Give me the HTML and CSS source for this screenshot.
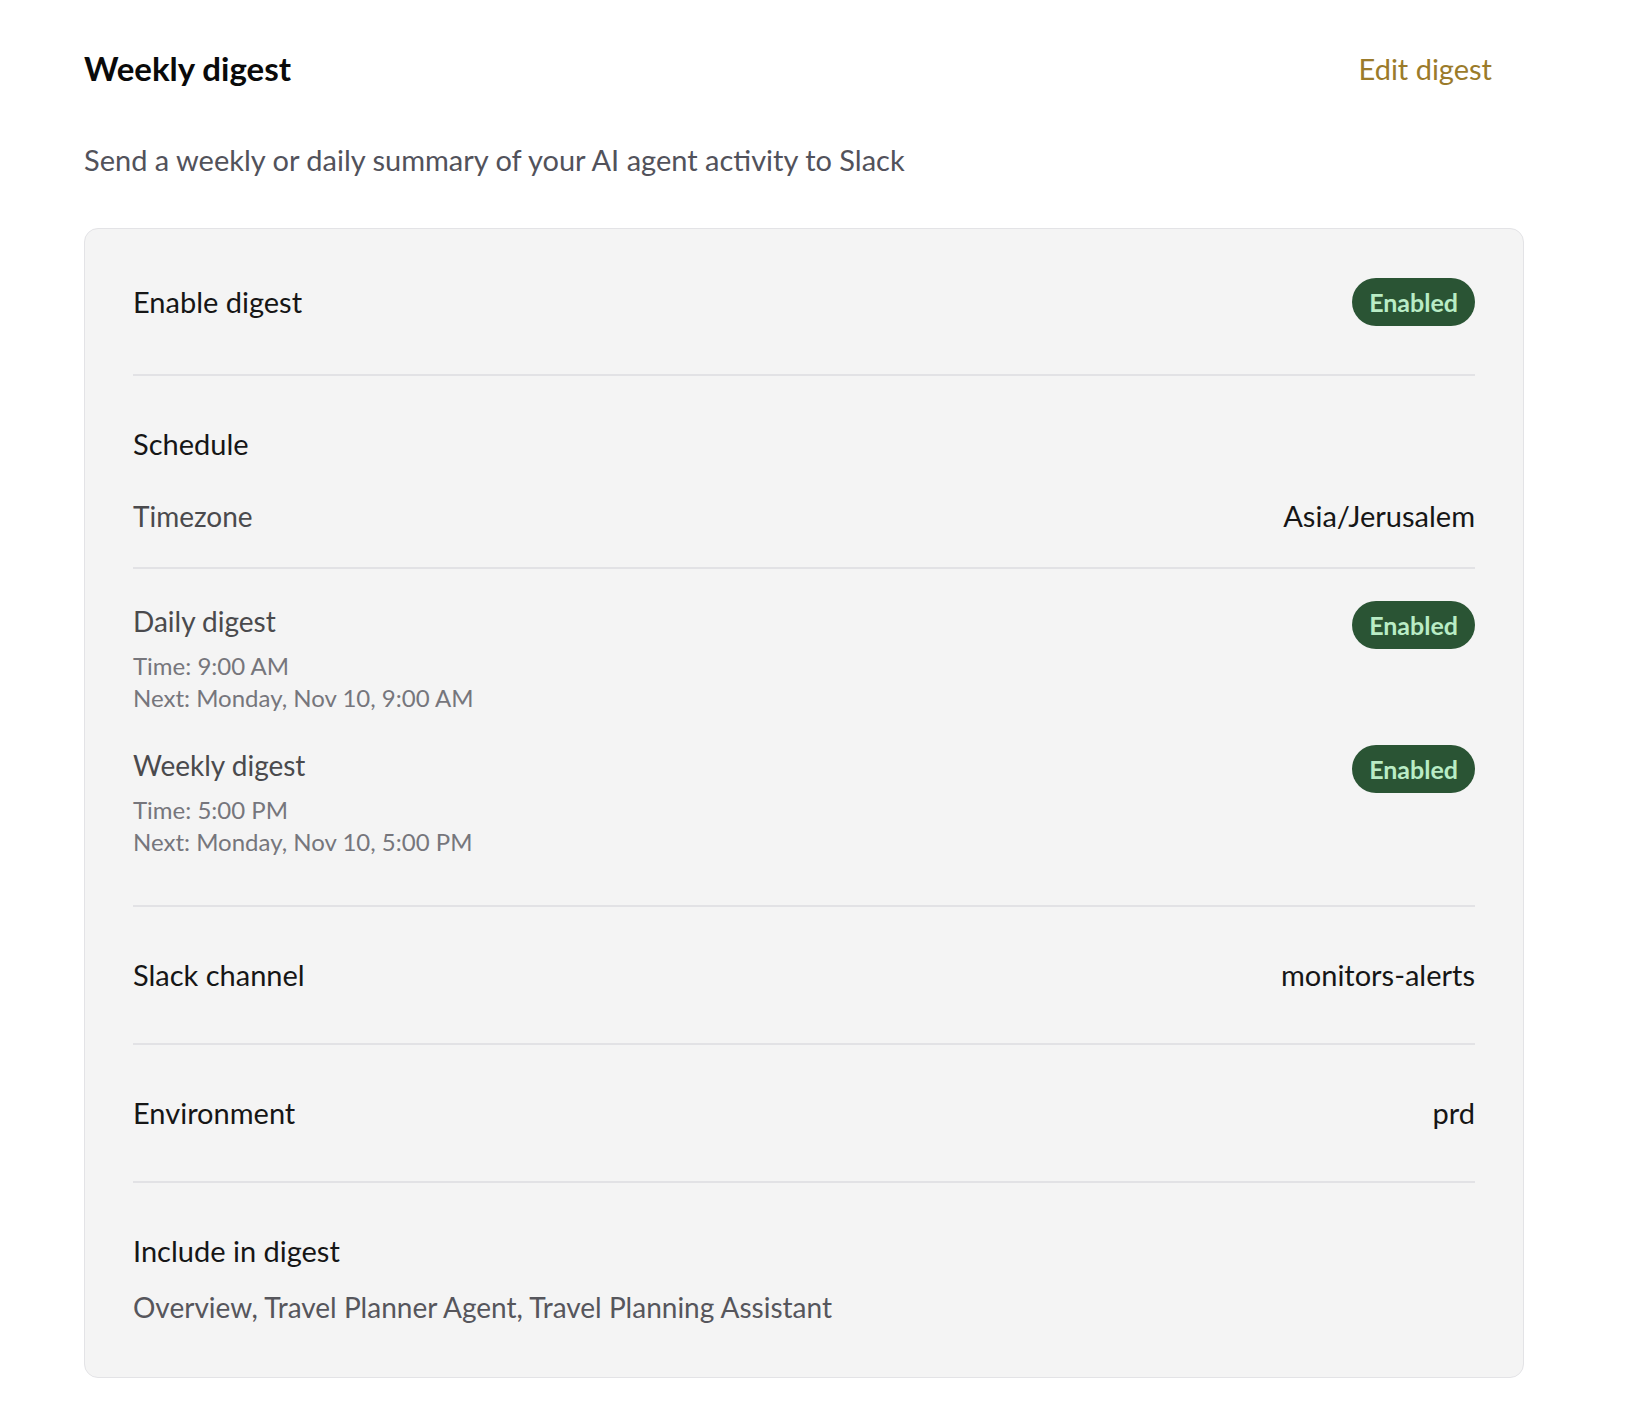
FILE: index.html
```html
<!DOCTYPE html>
<html lang="en">
<head>
<meta charset="utf-8">
<title>Weekly digest</title>
<link rel="stylesheet" href="styles.css">
</head>
<body>
<main class="page">
  <header class="header">
    <h1 class="title">Weekly digest</h1>
    <button class="edit-btn" type="button">Edit digest</button>
  </header>
  <p class="subtitle">Send a weekly or daily summary of your AI agent activity to Slack</p>

  <section class="card">
    <div class="row row-main row-first">
      <span class="label">Enable digest</span>
      <span class="badge">Enabled</span>
    </div>

    <div class="section schedule">
      <div class="label">Schedule</div>
      <div class="kv">
        <span class="muted-label">Timezone</span>
        <span class="value">Asia/Jerusalem</span>
      </div>
    </div>

    <div class="section digests">
      <div class="digest">
        <div class="digest-info">
          <div class="muted-label">Daily digest</div>
          <div class="meta">
            <div>Time: 9:00 AM</div>
            <div>Next: Monday, Nov 10, 9:00 AM</div>
          </div>
        </div>
        <span class="badge">Enabled</span>
      </div>
      <div class="digest">
        <div class="digest-info">
          <div class="muted-label">Weekly digest</div>
          <div class="meta">
            <div>Time: 5:00 PM</div>
            <div>Next: Monday, Nov 10, 5:00 PM</div>
          </div>
        </div>
        <span class="badge">Enabled</span>
      </div>
    </div>

    <div class="row row-main">
      <span class="label">Slack channel</span>
      <span class="value">monitors-alerts</span>
    </div>

    <div class="row row-main">
      <span class="label">Environment</span>
      <span class="value">prd</span>
    </div>

    <div class="section include">
      <div class="label">Include in digest</div>
      <div class="include-list">Overview, Travel Planner Agent, Travel Planning Assistant</div>
    </div>
  </section>
</main>
</body>
</html>
```

FILE: styles.css
```css
* {
  box-sizing: border-box;
}

html, body {
  margin: 0;
  padding: 0;
  background: #ffffff;
}

body {
  font-family: "Lato", "Noto Sans", sans-serif;
  color: #1a1a1a;
}

.page {
  width: 1440px;
  margin-left: 84px;
  padding-top: 48px;
}

.header {
  display: flex;
  align-items: center;
  justify-content: space-between;
  height: 41px;
}

.title {
  margin: 0;
  font-size: 33px;
  font-weight: 700;
  line-height: 41px;
  color: #0a0a0a;
}

.edit-btn {
  background: none;
  border: none;
  padding: 0 32px 0 0;
  font-family: inherit;
  font-size: 29px;
  line-height: 41px;
  color: #9b7b2a;
  cursor: pointer;
}

.subtitle {
  margin: 51px 0 0;
  font-size: 29px;
  line-height: 40px;
  color: #52525b;
}

.card {
  margin-top: 48px;
  background: #f4f4f4;
  border: 1px solid #e3e3e6;
  border-radius: 14px;
  padding: 0 48px;
}

.row {
  display: flex;
  align-items: center;
  justify-content: space-between;
}

.row-main {
  padding: 48px 0;
  border-bottom: 2px solid #e2e2e5;
}

.row-first {
  padding: 49px 0 48px;
}

.label {
  font-size: 29px;
  line-height: 40px;
  color: #161616;
}

.value {
  font-size: 29px;
  line-height: 40px;
  color: #161616;
}

.muted-label {
  font-size: 28px;
  line-height: 40px;
  color: #4a4a4d;
}

.badge {
  display: inline-flex;
  align-items: center;
  justify-content: center;
  height: 48px;
  padding: 0 17px;
  border-radius: 24px;
  background: #2a5434;
  color: #b9ecc5;
  font-size: 25px;
  font-weight: 700;
  line-height: 1;
}

.section {
  border-bottom: 2px solid #e2e2e5;
}

.schedule {
  padding: 48px 0 31px;
}

.kv {
  display: flex;
  align-items: center;
  justify-content: space-between;
  margin-top: 32px;
}

.digests {
  display: flex;
  flex-direction: column;
  gap: 31px;
  padding: 32px 0 47px;
}

.digest {
  display: flex;
  align-items: flex-start;
  justify-content: space-between;
}

.meta {
  margin-top: 9px;
  font-size: 24px;
  line-height: 32px;
  color: #76767c;
}

.include {
  border-bottom: none;
  padding: 48px 0 50px;
}

.include-list {
  margin-top: 16px;
  font-size: 28px;
  line-height: 40px;
  color: #56565c;
}
```
